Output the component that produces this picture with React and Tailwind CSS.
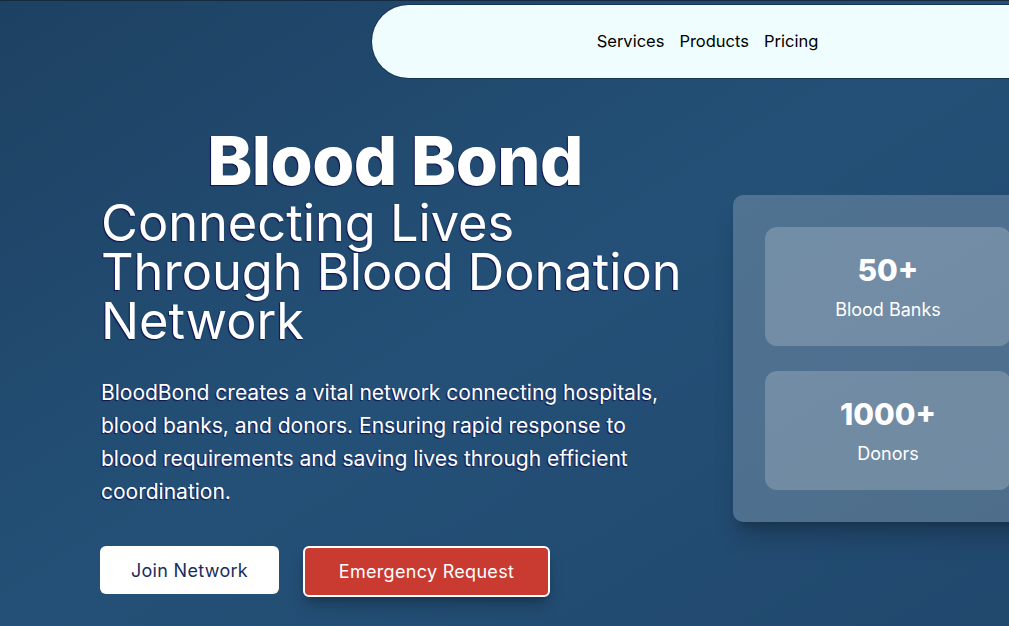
import React from 'react';

const stats = [
  { value: '50+', label: 'Blood Banks' },
  { value: '1000+', label: 'Donors' },
];

const App = () => {
  return (
    <div className="w-[1009px] h-[626px] overflow-hidden border-t border-[#142a40] bg-gradient-to-br from-[#1d4162] via-[#245077] to-[#21486d] font-['Inter',sans-serif] text-white">
      <div className="w-[1043px] pt-[4px]">
        {/* Top nav */}
        <nav className="ml-[372px] h-[73px] rounded-l-[40px] bg-[#effdfe] shadow-[0_0_0_1px_#173452] flex items-center justify-center gap-[15px] text-[16.5px] text-black">
          <a>Services</a>
          <a>Products</a>
          <a>Pricing</a>
        </nav>

        <div className="flex items-start pl-[101px]">
          {/* Hero copy */}
          <div className="w-[588px] pt-[46px]">
            <h1 className="text-center text-[68px] font-extrabold leading-[72px] tracking-[-0.5px] [text-shadow:-1px_1px_1px_#12124f]">
              Blood Bond
            </h1>
            <h2 className="text-[50.5px] leading-[49px] font-normal mt-[2px] [text-shadow:-1px_1px_1px_#12124f]">
              Connecting Lives Through Blood Donation Network
            </h2>
            <p className="mt-[31px] w-[565px] text-[21px] leading-[33px] [text-shadow:-1px_1px_1px_#12124f]">
              BloodBond creates a vital network connecting hospitals, blood banks, and donors. Ensuring rapid response to blood requirements and saving lives through efficient coordination.
            </p>
            <div className="flex items-start gap-[24px] mt-[38px] -ml-px">
              <button className="w-[179px] h-[48px] rounded-[6px] bg-white text-[#1b2c5c] text-[18px] tracking-[0.3px]">
                Join Network
              </button>
              <button className="w-[247px] h-[51px] rounded-[6px] bg-[#c93a31] border-2 border-white text-white text-[18px] tracking-[0.3px] shadow-lg shadow-black/25">
                Emergency Request
              </button>
            </div>
          </div>

          {/* Stats panel */}
          <div className="ml-[44px] mt-[117px] w-[310px] p-[32px] rounded-[10px] bg-white/20 shadow-xl shadow-black/20 flex flex-col gap-[25px]">
            {stats.map((s) => (
              <div key={s.label} className="h-[119px] rounded-[12px] bg-white/20 flex flex-col items-center justify-center gap-[16px]">
                <div className="text-[30px] font-extrabold leading-none">{s.value}</div>
                <div className="text-[18px] leading-none">{s.label}</div>
              </div>
            ))}
          </div>
        </div>
      </div>
    </div>
  );
};

export default App;
